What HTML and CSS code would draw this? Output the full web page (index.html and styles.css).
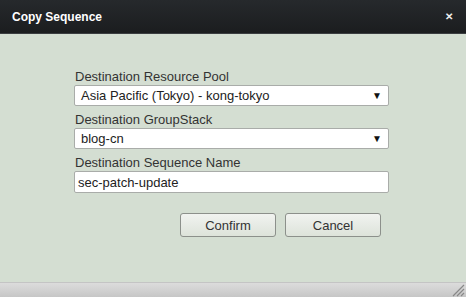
FILE: index.html
```html
<!DOCTYPE html>
<html lang="en">
<head>
    <meta charset="UTF-8">
    <title>Copy Sequence</title>
    <link rel="stylesheet" href="styles.css">
</head>
<body>
    <div class="dialog">
        <div class="titlebar">
            <span class="title">Copy Sequence</span>
            <span class="close">&#x2715;</span>
        </div>
        <div class="content">
            <div class="form">
                <label class="label">Destination Resource Pool</label>
                <div class="select">
                    <span>Asia Pacific (Tokyo) - kong-tokyo</span>
                    <span class="arrow">&#9660;</span>
                </div>
                <label class="label">Destination GroupStack</label>
                <div class="select">
                    <span>blog-cn</span>
                    <span class="arrow">&#9660;</span>
                </div>
                <label class="label">Destination Sequence Name</label>
                <div class="input">sec-patch-update</div>
                <div class="buttons">
                    <button class="btn">Confirm</button>
                    <button class="btn">Cancel</button>
                </div>
            </div>
        </div>
        <div class="footer">
            <svg class="grip" width="14" height="14" viewBox="0 0 14 14">
                <path d="M13 2 L2 13 M13 6 L6 13 M13 10 L10 13" stroke="#888" stroke-width="1.2" fill="none"/>
            </svg>
        </div>
    </div>
</body>
</html>
```

FILE: styles.css
```css
body {
    margin: 0;
    font-family: "Liberation Sans", Arial, sans-serif;
    width: 466px;
    height: 297px;
    overflow: hidden;
}
.dialog {
    display: flex;
    flex-direction: column;
    height: 297px;
}
.titlebar {
    background: linear-gradient(#26292c, #1b1d1f);
    border-bottom: 1px solid #3a3d40;
    display: flex;
    align-items: center;
    justify-content: space-between;
    padding: 0 12px 0 12px;
    box-sizing: border-box;
    height: 34px;
}
.title {
    color: #fff;
    font-weight: bold;
    font-size: 12px;
}
.close {
    color: #eee;
    font-size: 10px;
    font-weight: bold;
    margin-right: 1px;
}
.content {
    flex: 1;
    background-color: #d4ded2;
    padding: 35px 0 0 74px;
}
.form {
    width: 315px;
    display: flex;
    flex-direction: column;
}
.label {
    font-size: 13px;
    color: #333;
    height: 16px;
    padding-left: 1px;
}
.select, .input {
    background: #fff;
    border: 1px solid #a9aca9;
    border-radius: 2px;
    height: 21px;
    box-sizing: border-box;
    font-size: 13px;
    color: #222;
    display: flex;
    align-items: center;
    margin-bottom: 6px;
}
.select {
    padding: 0 6px 0 6px;
    justify-content: space-between;
}
.input {
    height: 22px;
    padding-left: 3px;
}
.arrow {
    font-size: 10px;
    color: #111;
}
.buttons {
    display: flex;
    gap: 9px;
    margin: 14px 0 0 106px;
}
.btn {
    width: 96px;
    height: 24px;
    font-family: "Liberation Sans", Arial, sans-serif;
    font-size: 13px;
    color: #333;
    background: linear-gradient(#f1f3f0, #dde3da);
    border: 1px solid #8c908b;
    border-radius: 3px;
}
.footer {
    height: 14px;
    background: linear-gradient(#dcdcdc, #c6c6c6);
    border-top: 1px solid #c4c4c4;
    display: flex;
    justify-content: flex-end;
}
.grip {
    margin-right: 1px;
}
```
